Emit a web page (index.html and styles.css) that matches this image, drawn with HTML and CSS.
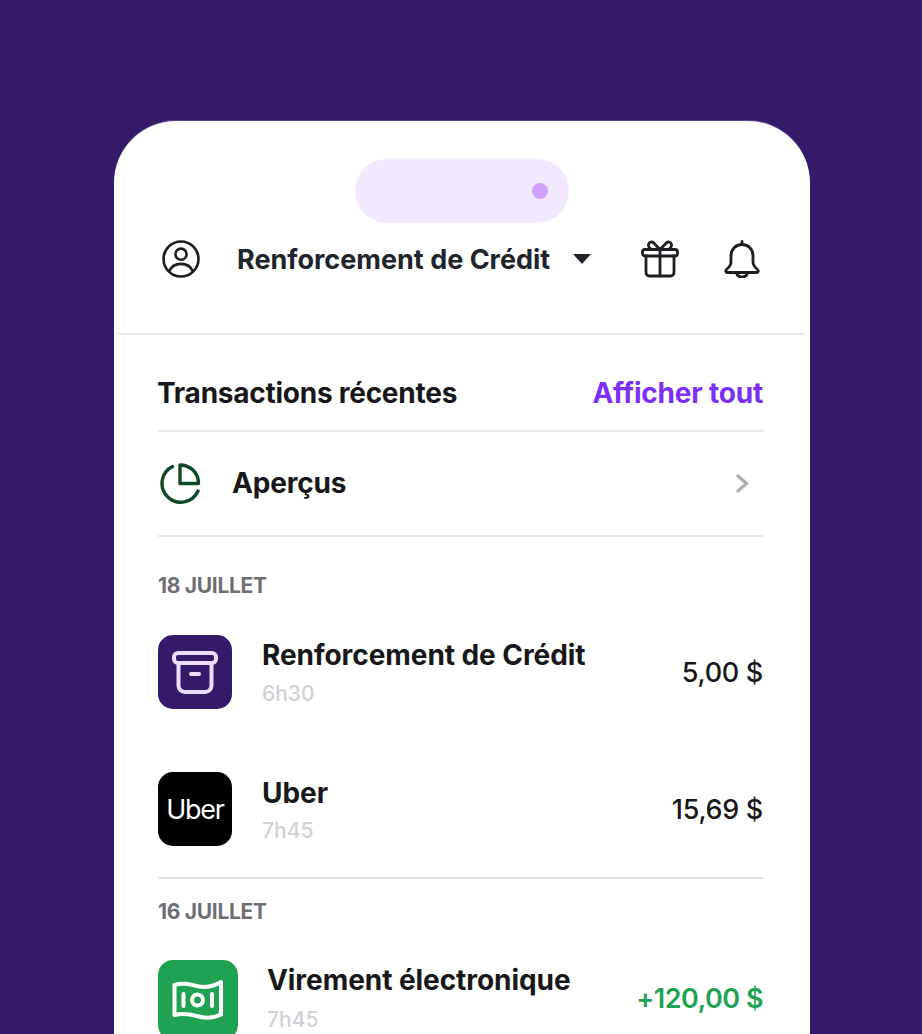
FILE: index.html
```html
<!DOCTYPE html>
<html lang="fr">
<head>
    <meta charset="UTF-8">
    <title>Transactions récentes</title>
    <link rel="stylesheet" href="styles.css">
</head>
<body>
    <div class="phone">
        <div class="notch"><span class="notch-dot"></span></div>

        <!-- Top bar -->
        <div class="top-bar">
            <svg class="icon-user" width="38" height="38" viewBox="0 0 38 38" fill="none" stroke="#1c1e22" stroke-width="2.6">
                <circle cx="19" cy="19" r="17.500"/>
                <circle cx="19" cy="14.200" r="5.600"/>
                <path d="M7 31.500c2.200-5 6.600-7.600 12-7.600s9.800 2.600 12 7.600"/>
            </svg>
            <span class="account-name">Renforcement de Crédit</span>
            <span class="caret"></span>
            <svg class="icon-gift" width="38" height="38" viewBox="0 0 38 38" fill="none" stroke="#1c1e22" stroke-width="2.800" stroke-linejoin="round" stroke-linecap="round">
                <rect x="1.500" y="9.500" width="35" height="6.500" rx="2.500"/>
                <path d="M5 16v16.500a3.500 3.500 0 0 0 3.500 3.500h21a3.500 3.500 0 0 0 3.500-3.500V16"/>
                <path d="M19 9.500V36"/>
                <path d="M19 9.500L12.500 2.800C11 1.300 8 2 7.500 4.300 7 6.800 9 9.500 11.500 9.500z"/>
                <path d="M19 9.500l6.500-6.700c1.500-1.500 4.500-.8 5 1.500.5 2.500-1.500 5.200-4 5.200z"/>
            </svg>
            <svg class="icon-bell" width="36" height="38" viewBox="0 0 36 38" fill="none" stroke="#1c1e22" stroke-width="2.800" stroke-linejoin="round" stroke-linecap="round">
                <path d="M18 1.500v3"/>
                <path d="M18 4.500c-6.500 0-11 5-11 11.500v6c0 3-1.500 5-4.500 7.500-1.200 1-1 3 1 3h29c2 0 2.200-2 1-3-3-2.500-4.500-4.500-4.500-7.500v-6c0-6.500-4.500-11.500-11-11.500z"/>
                <path d="M12.500 32.500c.5 3 2.800 4.500 5.500 4.500s5-1.500 5.500-4.500"/>
            </svg>
        </div>

        <div class="content">
            <div class="section-head">
                <span class="section-title">Transactions récentes</span>
                <span class="see-all">Afficher tout</span>
            </div>

            <div class="insights">
                <svg class="icon-pie" width="42" height="42" viewBox="0 0 42 42" fill="none" stroke="#0f4a26" stroke-width="3.400" stroke-linecap="round" stroke-linejoin="round">
                    <path d="M13.500 3.500A18.800 18.800 0 1 0 39 28"/>
                    <path d="M21 2v18.500h18.500C39.500 10 31.500 2 21 2z"/>
                </svg>
                <span class="insights-label">Aperçus</span>
                <svg class="icon-chevron" width="13" height="19" viewBox="0 0 13 19" fill="none" stroke="#aeaeb4" stroke-width="3.400" stroke-linecap="round" stroke-linejoin="round">
                    <path d="M2 2l8.500 7.500L2 17"/>
                </svg>
            </div>

            <div class="day-label first">18 JUILLET</div>

            <div class="tx">
                <div class="tx-icon tx-icon-purple">
                    <svg width="46" height="43" viewBox="0 0 46 43" fill="none" stroke="#ecdcff" stroke-width="4" stroke-linecap="round" stroke-linejoin="round">
                        <rect x="2" y="2" width="42" height="10" rx="4"/>
                        <path d="M6.500 12v22.500a6.500 6.500 0 0 0 6.500 6.500h20a6.500 6.500 0 0 0 6.500-6.500V12"/>
                        <path d="M19 23h8"/>
                    </svg>
                </div>
                <div class="tx-text">
                    <div class="tx-name">Renforcement de Crédit</div>
                    <div class="tx-time">6h30</div>
                </div>
                <div class="tx-amount">5,00 $</div>
            </div>

            <div class="tx tx-second">
                <div class="tx-icon tx-icon-black"><span class="uber-logo">Uber</span></div>
                <div class="tx-text">
                    <div class="tx-name">Uber</div>
                    <div class="tx-time">7h45</div>
                </div>
                <div class="tx-amount">15,69 $</div>
            </div>

            <div class="day-label divided">16 JUILLET</div>

            <div class="tx tx-big">
                <div class="tx-icon tx-icon-green">
                    <svg width="52" height="42" viewBox="0 0 52 42" fill="none" stroke="#ffffff" stroke-width="4" stroke-linecap="round" stroke-linejoin="round">
                        <path d="M2.500 6c8-2.500 14-1 22 1s16 1 24.500-4v32.500c-8 4-16 4-24.500 1.500s-14-3-22-1z"/>
                        <circle cx="25.500" cy="21" r="5.500"/>
                        <path d="M11.500 15v12M40 15v12"/>
                    </svg>
                </div>
                <div class="tx-text">
                    <div class="tx-name">Virement électronique</div>
                    <div class="tx-time">7h45</div>
                </div>
                <div class="tx-amount credit">+120,00 $</div>
            </div>
        </div>
    </div>
</body>
</html>
```

FILE: styles.css
```css
html, body {
    margin: 0;
    height: 1034px;
    overflow: hidden;
}

body {
    background-color: #351a69;
    font-family: Inter, "Liberation Sans", sans-serif;
    color: #18181b;
    padding: 121px 112px 0 114px;
    box-sizing: border-box;
}

.phone {
    background-color: #fff;
    border-radius: 62px 62px 0 0;
    height: 913px;
    padding-top: 38px;
    box-sizing: border-box;
    box-shadow: 0 -1px 0 #5e4590;
}

.notch {
    width: 214px;
    height: 64px;
    margin-left: 241px;
    border-radius: 32px;
    background-color: #f3e9ff;
    display: flex;
    align-items: center;
    justify-content: flex-end;
    padding-right: 21px;
    box-sizing: border-box;
}

.notch-dot {
    width: 16px;
    height: 16px;
    border-radius: 50%;
    background-color: #cfa0ff;
}

.top-bar {
    display: flex;
    align-items: center;
    margin: 17px 6px 0 4px;
    padding: 0 0 55px 44px;
    height: 38px;
    border-bottom: 2px solid #e9e9eb;
}

.account-name {
    margin-left: 37px;
    font-size: 27px;
    font-weight: 700;
    color: #20242b;
    white-space: nowrap;
}

.caret {
    margin-left: 23px;
    border-left: 9px solid transparent;
    border-right: 9px solid transparent;
    border-top: 10px solid #20242b;
}

.icon-gift {
    margin-left: 50px;
}

.icon-bell {
    margin-left: 45px;
}

.content {
    padding: 0 46px 0 44px;
}

.section-head {
    display: flex;
    justify-content: space-between;
    align-items: flex-end;
    height: 95px;
    padding-right: 1px;
    border-bottom: 2px solid #e9e9eb;
}

.section-title,
.see-all {
    line-height: 34px;
    margin-bottom: 20px;
    font-size: 28px;
    font-weight: 700;
}

.section-title {
    margin-left: -1px;
    letter-spacing: -0.25px;
}

.see-all {
    letter-spacing: -0.2px;
    color: #7b2ff7;
}

.insights {
    display: flex;
    align-items: center;
    height: 103px;
    padding-left: 1px;
    border-bottom: 2px solid #e9e9eb;
}

.insights-label {
    margin-left: 31px;
    margin-bottom: 2px;
    font-size: 28px;
    font-weight: 700;
    letter-spacing: -0.2px;
    flex: 1;
}

.icon-chevron {
    margin-right: 15px;
}

.day-label {
    font-size: 21px;
    font-weight: 700;
    letter-spacing: -0.3px;
    color: #6f6e75;
    line-height: 24px;
}

.day-label.first {
    margin-top: 37px;
    margin-bottom: -1px;
}

.day-label.divided {
    margin-top: 31px;
    padding-top: 21px;
    margin-bottom: -1px;
    border-top: 2px solid #e3e3e5;
}

.tx {
    display: flex;
    align-items: center;
    margin-top: 38px;
}

.tx-second {
    margin-top: 63px;
}

.tx-big {
    margin-top: 37px;
    align-items: flex-start;
}

.tx-icon {
    flex: none;
    width: 74px;
    height: 74px;
    border-radius: 15px;
    display: flex;
    align-items: center;
    justify-content: center;
}

.tx-icon-purple {
    background-color: #351a69;
}

.tx-icon-black {
    background-color: #000;
}

.tx-icon-green {
    width: 80px;
    height: 80px;
    background-color: #1fa353;
}

.uber-logo {
    color: #fff;
    font-size: 27px;
    font-weight: 400;
    letter-spacing: -1.3px;
}

.tx-text {
    flex: 1;
    margin-left: 30px;
}

.tx-name {
    font-size: 28px;
    font-weight: 700;
    letter-spacing: -0.06px;
    line-height: 32px;
}

.tx-time {
    margin-top: 11px;
    font-size: 21px;
    font-weight: 500;
    color: #d1d1d6;
    line-height: 24px;
}

.tx-second .tx-text {
    padding-top: 2px;
}

.tx-second .tx-time {
    margin-top: 10px;
}

.tx-big .tx-text {
    margin-top: 4px;
    margin-left: 29px;
}

.tx-big .tx-time {
    margin-top: 12px;
}

.tx-amount {
    font-size: 27px;
    font-weight: 500;
    letter-spacing: -0.3px;
    margin-right: 1px;
}

.tx-amount.credit {
    margin-top: 22px;
    font-weight: 600;
    letter-spacing: -0.5px;
    color: #1fa353;
}
```
